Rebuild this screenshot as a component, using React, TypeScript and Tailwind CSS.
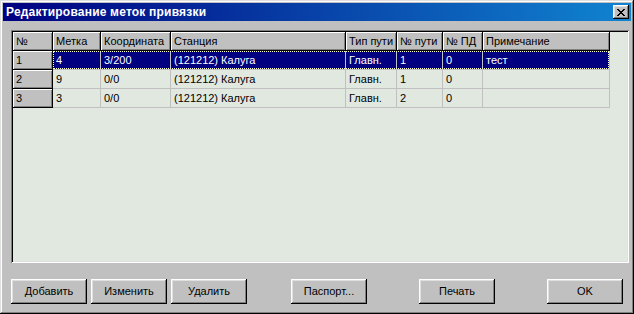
import React from 'react';

const colW = ['w-[40px]', 'w-[48px]', 'w-[70px]', 'w-[175px]', 'w-[51px]', 'w-[46px]', 'w-[40px]', 'w-[127px]'];
const headers = ['№', 'Метка', 'Координата', 'Станция', 'Тип пути', '№ пути', '№ ПД', 'Примечание'];
const rows = [
  ['1', '4', '3/200', '(121212) Калуга', 'Главн.', '1', '0', 'тест'],
  ['2', '9', '0/0', '(121212) Калуга', 'Главн.', '1', '0', ''],
  ['3', '3', '0/0', '(121212) Калуга', 'Главн.', '2', '0', ''],
];

function FixedCell({ w, children }: { w: string; children: React.ReactNode }) {
  return (
    <div className={`${w} h-[19px] flex-none box-border border-r border-b border-black bg-[#c0c0c0] shadow-[inset_1px_1px_#ffffff,inset_-1px_-1px_#808080] pl-[3px] leading-[18px] text-black whitespace-nowrap overflow-hidden`}>
      {children}
    </div>
  );
}

function Button({ label, className = '' }: { label: string; className?: string }) {
  return (
    <button className={`w-[76px] h-[25px] flex-none bg-[#c0c0c0] text-black text-[11px] shadow-[inset_-1px_-1px_#000000,inset_1px_1px_#ffffff,inset_-2px_-2px_#808080,inset_2px_2px_#dfdfdf] ${className}`}>
      {label}
    </button>
  );
}

export default function App() {
  return (
    <div className="w-[634px] h-[314px] bg-[#c0c0c0] font-['Liberation_Sans',Arial,sans-serif] text-[11px] p-[3px] flex flex-col shadow-[inset_-1px_-1px_#000000,inset_1px_1px_#dfdfdf,inset_-2px_-2px_#808080,inset_2px_2px_#ffffff] select-none">
      <div className="h-[18px] flex-none flex items-center bg-[linear-gradient(to_right,#000080,#1084d0)] pl-[3px] pr-[2px]">
        <span className="text-white font-bold text-[12px] tracking-[0.2px] flex-1">Редактирование меток привязки</span>
        <div className="w-[16px] h-[14px] bg-[#c0c0c0] flex items-center justify-center shadow-[inset_-1px_-1px_#000000,inset_1px_1px_#ffffff,inset_-2px_-2px_#808080,inset_2px_2px_#dfdfdf]">
          <svg width="8" height="7" viewBox="0 0 8 7" shapeRendering="crispEdges">
            <path d="M0 0h2v1h-2zM6 0h2v1h-2zM1 1h2v1h-2zM5 1h2v1h-2zM2 2h4v1h-4zM3 3h2v1h-2zM2 4h4v1h-4zM1 5h2v1h-2zM5 5h2v1h-2zM0 6h2v1h-2zM6 6h2v1h-2z" fill="#000" />
          </svg>
        </div>
      </div>

      <div className="flex-1 flex flex-col pl-[8px] pr-[2px] pt-[9px]">
        <div className="w-[618px] h-[233px] flex-none bg-[#e0e8e0] p-[2px] shadow-[inset_1px_1px_#808080,inset_-1px_-1px_#ffffff,inset_2px_2px_#000000,inset_-2px_-2px_#dfdfdf]">
          <div className="flex">
            {headers.map((h, i) => (
              <FixedCell key={h} w={colW[i]}>{h}</FixedCell>
            ))}
          </div>
          {rows.map((r, ri) => (
            <div key={ri} className="flex">
              <FixedCell w={colW[0]}>{r[0]}</FixedCell>
              <div className={`relative flex ${ri === 0 ? 'bg-[#000080] text-white' : 'text-black'}`}>
                {r.slice(1).map((c, ci) => (
                  <div
                    key={ci}
                    className={`${colW[ci + 1]} h-[19px] flex-none box-border border-r border-b border-[#c0c0c0] pl-[3px] leading-[18px] whitespace-nowrap overflow-hidden`}
                  >
                    {c}
                  </div>
                ))}
                {ri === 0 && (
                  <div className="absolute left-0 top-0 right-[1px] bottom-[1px] border border-dotted border-[#ffffc8] pointer-events-none" />
                )}
              </div>
            </div>
          ))}
        </div>

        <div className="flex mt-[16px]">
          <Button label="Добавить" />
          <Button label="Изменить" className="ml-[4px]" />
          <Button label="Удалить" className="ml-[4px]" />
          <Button label="Паспорт..." className="ml-[44px]" />
          <Button label="Печать" className="ml-[52px]" />
          <Button label="OK" className="ml-[52px]" />
        </div>
      </div>
    </div>
  );
}
